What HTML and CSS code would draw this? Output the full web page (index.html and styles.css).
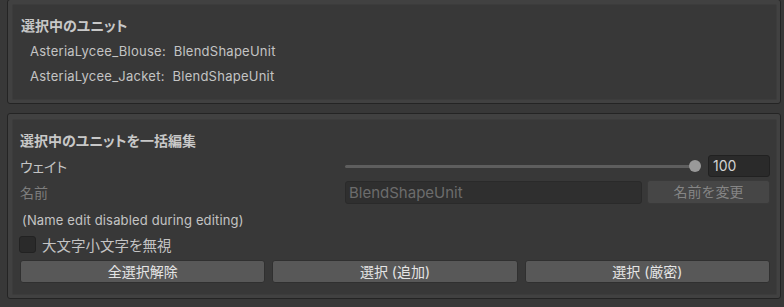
FILE: index.html
```html
<!DOCTYPE html>
<html lang="ja">
<head>
<meta charset="utf-8">
<link rel="stylesheet" href="styles.css">
</head>
<body>
<section class="box box-first">
  <div class="inner inner-top">
    <div class="title">選択中のユニット</div>
    <div class="item">AsteriaLycee_Blouse:  BlendShapeUnit</div>
    <div class="item">AsteriaLycee_Jacket:  BlendShapeUnit</div>
  </div>
</section>
<section class="box box-second">
  <div class="inner inner-bottom">
    <div class="title title2">選択中のユニットを一括編集</div>
    <div class="row row-weight">
      <span class="label">ウェイト</span>
      <div class="field">
        <div class="slider"><div class="track"></div><div class="thumb"></div></div>
        <div class="num">100</div>
      </div>
    </div>
    <div class="row row-name">
      <span class="label disabled">名前</span>
      <div class="field">
        <div class="textfield">BlendShapeUnit</div>
        <div class="btn btn-disabled btn-rename">名前を変更</div>
      </div>
    </div>
    <div class="note">(Name edit disabled during editing)</div>
    <div class="check-row">
      <span class="checkbox"></span>
      <span class="check-label">大文字小文字を無視</span>
    </div>
    <div class="buttons">
      <div class="btn">全選択解除</div>
      <div class="btn">選択 (追加)</div>
      <div class="btn">選択 (厳密)</div>
    </div>
  </div>
</section>
</body>
</html>
```

FILE: styles.css
```css
html, body {
  margin: 0;
  padding: 0;
  background: #383838;
  width: 784px;
  height: 307px;
  overflow: hidden;
  font-family: Inter, "Noto Sans CJK JP", sans-serif;
  color: #c4c4c4;
  font-size: 13px;
}

.box {
  margin: 0 3px 0 7px;
  border: 1px solid #242424;
  border-radius: 3px;
  background: #414141;
  padding: 4px 3px 3px 4px;
}

.box-first {
  margin-top: -1px;
}

.box-second {
  margin-top: 9px;
  padding-top: 5px;
}

.inner {
  background: #383838;
  border: 1px solid #3c3c3c;
  border-radius: 2px;
  box-sizing: border-box;
}

.inner-top {
  height: 96px;
  padding: 11px 8px 0 8px;
}

.inner-bottom {
  height: 176px;
  padding: 11px 6px 0 7px;
}

.title {
  font-weight: bold;
  font-size: 14px;
  line-height: 20px;
  height: 20px;
  color: #c8c8c8;
  font-feature-settings: "palt";
}

.item {
  white-space: pre;
  font-size: 13px;
  letter-spacing: 0.25px;
  line-height: 25px;
  height: 25px;
  padding-left: 9px;
}

.inner-top .title {
  margin-bottom: 3px;
}

.row {
  display: flex;
  align-items: center;
}

.label {
  width: 325px;
  flex: none;
  font-size: 14px;
  font-feature-settings: "palt";
}

.label.disabled {
  color: #7d7d7d;
}

.field {
  flex: 1;
  display: flex;
  align-items: center;
}

.row-weight {
  margin-top: 4px;
  height: 22px;
}

.row-name {
  margin-top: 3px;
  height: 24px;
}

.slider {
  flex: 1;
  height: 22px;
  display: flex;
  align-items: center;
  position: relative;
  margin-right: 7px;
}

.track {
  flex: 1;
  height: 3px;
  background: #5e5e5e;
  border-radius: 2px;
  margin-right: 4px;
}

.thumb {
  width: 12px;
  height: 12px;
  border-radius: 50%;
  background: #999999;
  position: absolute;
  right: 0;
  top: 5px;
}

.num {
  width: 62px;
  height: 22px;
  box-sizing: border-box;
  background: #2a2a2a;
  border: 1px solid #212121;
  border-radius: 3px;
  font-size: 14px;
  line-height: 20px;
  padding-left: 4px;
  color: #d2d2d2;
}

.textfield {
  width: 297px;
  height: 23px;
  box-sizing: border-box;
  background: #2f2f2f;
  border: 1px solid #2a2a2a;
  border-radius: 3px;
  font-size: 15px;
  line-height: 21px;
  padding-left: 3px;
  color: #6c6c6c;
  margin-right: 5px;
}

.btn {
  height: 23px;
  box-sizing: border-box;
  background: #585858;
  border: 1px solid #303030;
  border-radius: 3px;
  color: #e4e4e4;
  font-size: 14px;
  line-height: 21px;
  text-align: center;
}

.btn-rename {
  width: 123px;
  height: 24px;
  line-height: 22px;
}

.btn-disabled {
  background: #464646;
  border-color: #3a3a3a;
  color: #858585;
}

.note {
  margin-top: 8px;
  font-size: 13px;
  letter-spacing: 0.15px;
  line-height: 16px;
  height: 16px;
  padding-left: 2px;
}

.check-row {
  margin-top: 8px;
  height: 17px;
  display: flex;
  align-items: center;
}

.checkbox {
  width: 17px;
  height: 17px;
  box-sizing: border-box;
  background: #2a2a2a;
  border: 1px solid #222222;
  border-radius: 3px;
  margin-left: -1px;
  margin-right: 6px;
}

.check-label {
  font-size: 14.5px;
  font-feature-settings: "palt";
}

.buttons {
  margin-top: 7px;
  display: grid;
  grid-template-columns: 1fr 1fr 1fr;
  gap: 7px;
}
```
